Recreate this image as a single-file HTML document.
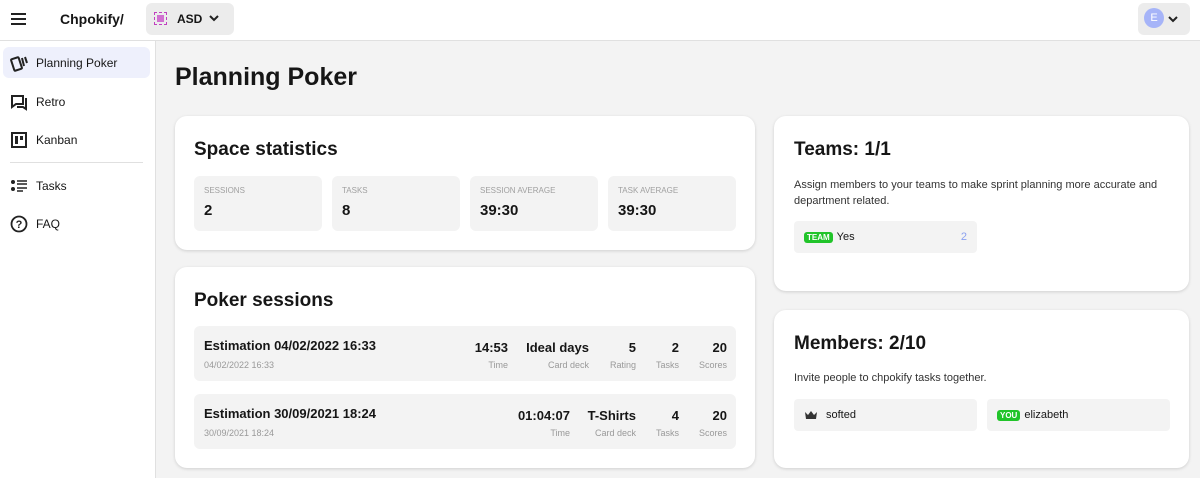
<!DOCTYPE html><html><head><style>
*{box-sizing:border-box;margin:0;padding:0}
body{width:1200px;height:478px;overflow:hidden;font-family:"Liberation Sans",sans-serif;background:#f3f3f3;color:#161616;position:relative}
.a{position:absolute}
.hdr{left:0;top:0;width:1200px;height:41px;background:#fff;border-bottom:1px solid #e0e0e0}
.side{left:0;top:41px;width:156px;height:437px;background:#fff;border-right:1px solid #e0e0e0}
.nav{position:absolute;left:3px;width:147px;height:31px;border-radius:6px;font-size:12px;display:flex;align-items:center;padding-left:7px;gap:8px}
.nav svg{flex:none}
.card{position:absolute;background:#fff;border-radius:12px;box-shadow:0 1px 3px rgba(0,0,0,.15)}
.stat{position:absolute;top:176px;width:128px;height:55px;background:#f3f3f3;border-radius:6px;padding:10px}
.stat .l{font-size:8px;color:#a0a0a0;text-transform:uppercase}
.stat .v{font-size:15px;font-weight:bold;margin-top:7px}
.row{position:absolute;left:194px;width:542px;height:55px;background:#f3f3f3;border-radius:6px}
.row .t{position:absolute;left:10px;top:12px;font-size:13px;font-weight:bold}
.row .d{position:absolute;left:10px;top:34px;font-size:9px;color:#999}
.c{position:absolute;top:14px;text-align:right}
.c b{display:block;font-size:13px}
.c span{display:block;font-size:9px;color:#999;margin-top:5px}
h2{font-size:19px;font-weight:bold}
.tag{background:#21c42a;color:#fff;font-size:8px;font-weight:bold;padding:1px 3px;border-radius:3px;vertical-align:1px}
.box{position:absolute;height:32px;background:#f3f3f3;border-radius:4px;font-size:11px;padding:0 10px;display:flex;align-items:center;gap:4px}
</style></head><body>
<div class="a hdr"></div>
<div class="a" style="left:11px;top:13px;width:15px;height:2px;background:#222;box-shadow:0 5px 0 #222,0 10px 0 #222"></div>
<div class="a" style="left:60px;top:11px;font-size:14px;font-weight:bold">Chpokify/</div>
<div class="a" style="left:146px;top:3px;width:88px;height:32px;background:#ececec;border-radius:6px"></div>
<div class="a" style="left:154px;top:12px;width:13px;height:13px;border:1px dashed #c040c0"><div style="margin:2px;width:7px;height:7px;background:#d070d0"></div></div>
<div class="a" style="left:177px;top:12px;font-size:12px;font-weight:bold">ASD</div>
<svg class="a" style="left:208px;top:14px" width="12" height="8" viewBox="0 0 12 8"><path d="M2 2l4 4 4-4" fill="none" stroke="#222" stroke-width="2"/></svg>
<div class="a" style="left:1138px;top:3px;width:52px;height:32px;background:#ececec;border-radius:6px"></div>
<div class="a" style="left:1144px;top:8px;width:20px;height:20px;border-radius:50%;background:#a6b4f8;color:#fff;font-size:11px;text-align:center;line-height:20px">E</div>
<svg class="a" style="left:1167px;top:15px" width="12" height="8" viewBox="0 0 12 8"><path d="M2 2l4 4 4-4" fill="none" stroke="#222" stroke-width="2"/></svg>
<div class="a side"></div>
<div class="nav" style="top:47px;background:#eef0fc"><svg width="18" height="18" viewBox="0 0 18 18"><rect x="2.5" y="4" width="8" height="12" rx="1" transform="rotate(-18 6.5 10)" fill="none" stroke="#222" stroke-width="2"/><path d="M12 4l2 8M15 3l2 6" stroke="#222" stroke-width="2" fill="none"/></svg>Planning Poker</div>
<div class="nav" style="top:86px"><svg width="18" height="18" viewBox="0 0 18 18"><path d="M2 3h11v8H6l-4 3z" fill="none" stroke="#222" stroke-width="2"/><path d="M15 6h1v10l-3-2H7" fill="none" stroke="#222" stroke-width="2"/></svg>Retro</div>
<div class="nav" style="top:124px"><svg width="18" height="18" viewBox="0 0 18 18"><rect x="2" y="2" width="14" height="14" fill="none" stroke="#222" stroke-width="2"/><rect x="5" y="5" width="3" height="8" fill="#222"/><rect x="10" y="5" width="3" height="4" fill="#222"/></svg>Kanban</div>
<div class="a" style="left:10px;top:162px;width:133px;height:1px;background:#e0e0e0"></div>
<div class="nav" style="top:170px"><svg width="18" height="18" viewBox="0 0 18 18"><circle cx="3" cy="5" r="2" fill="#222"/><circle cx="3" cy="12" r="2" fill="#222"/><path d="M7 4h10M7 7h10M7 11h10M7 14h6" stroke="#222" stroke-width="1.6"/></svg>Tasks</div>
<div class="nav" style="top:208px"><svg width="18" height="18" viewBox="0 0 18 18"><circle cx="9" cy="9" r="7.5" fill="none" stroke="#222" stroke-width="1.8"/><text x="9" y="13" font-size="11" font-weight="bold" text-anchor="middle" fill="#222" font-family="Liberation Sans">?</text></svg>FAQ</div>
<div class="a" style="left:175px;top:63px;font-size:25px;font-weight:bold">Planning Poker</div>
<div class="card" style="left:175px;top:116px;width:580px;height:134px"></div>
<div class="a" style="left:194px;top:139px"><h2>Space statistics</h2></div>
<div class="stat" style="left:194px"><div class="l">Sessions</div><div class="v">2</div></div>
<div class="stat" style="left:332px"><div class="l">Tasks</div><div class="v">8</div></div>
<div class="stat" style="left:470px"><div class="l">Session average</div><div class="v">39:30</div></div>
<div class="stat" style="left:608px"><div class="l">Task average</div><div class="v">39:30</div></div>
<div class="card" style="left:175px;top:267px;width:580px;height:201px"></div>
<div class="a" style="left:194px;top:290px"><h2>Poker sessions</h2></div>
<div class="row" style="top:326px"><div class="t">Estimation 04/02/2022 16:33</div><div class="d">04/02/2022 16:33</div>
<div class="c" style="right:228px"><b>14:53</b><span>Time</span></div>
<div class="c" style="right:147px"><b>Ideal days</b><span>Card deck</span></div>
<div class="c" style="right:100px"><b>5</b><span>Rating</span></div>
<div class="c" style="right:57px"><b>2</b><span>Tasks</span></div>
<div class="c" style="right:9px"><b>20</b><span>Scores</span></div></div>
<div class="row" style="top:394px"><div class="t">Estimation 30/09/2021 18:24</div><div class="d">30/09/2021 18:24</div>
<div class="c" style="right:166px"><b>01:04:07</b><span>Time</span></div>
<div class="c" style="right:100px"><b>T-Shirts</b><span>Card deck</span></div>
<div class="c" style="right:57px"><b>4</b><span>Tasks</span></div>
<div class="c" style="right:9px"><b>20</b><span>Scores</span></div></div>
<div class="card" style="left:774px;top:116px;width:415px;height:175px"></div>
<div class="a" style="left:794px;top:139px"><h2>Teams: 1/1</h2></div>
<div class="a" style="left:794px;top:177px;font-size:11px;line-height:16px;width:380px;color:#333">Assign members to your teams to make sprint planning more accurate and department related.</div>
<div class="box" style="left:794px;top:221px;width:183px"><span class="tag">TEAM</span> Yes<span style="margin-left:auto;color:#8aa0f0">2</span></div>
<div class="card" style="left:774px;top:310px;width:415px;height:158px"></div>
<div class="a" style="left:794px;top:333px"><h2>Members: 2/10</h2></div>
<div class="a" style="left:794px;top:372px;font-size:11px;color:#333">Invite people to chpokify tasks together.</div>
<div class="box" style="left:794px;top:399px;width:183px"><svg width="14" height="10" viewBox="0 0 14 10" style="margin-right:4px"><path d="M1 2l3 3 3-4 3 4 3-3-1 7H2z" fill="#333"/></svg>softed</div>
<div class="box" style="left:987px;top:399px;width:183px"><span class="tag">YOU</span> elizabeth</div>
</body></html>
